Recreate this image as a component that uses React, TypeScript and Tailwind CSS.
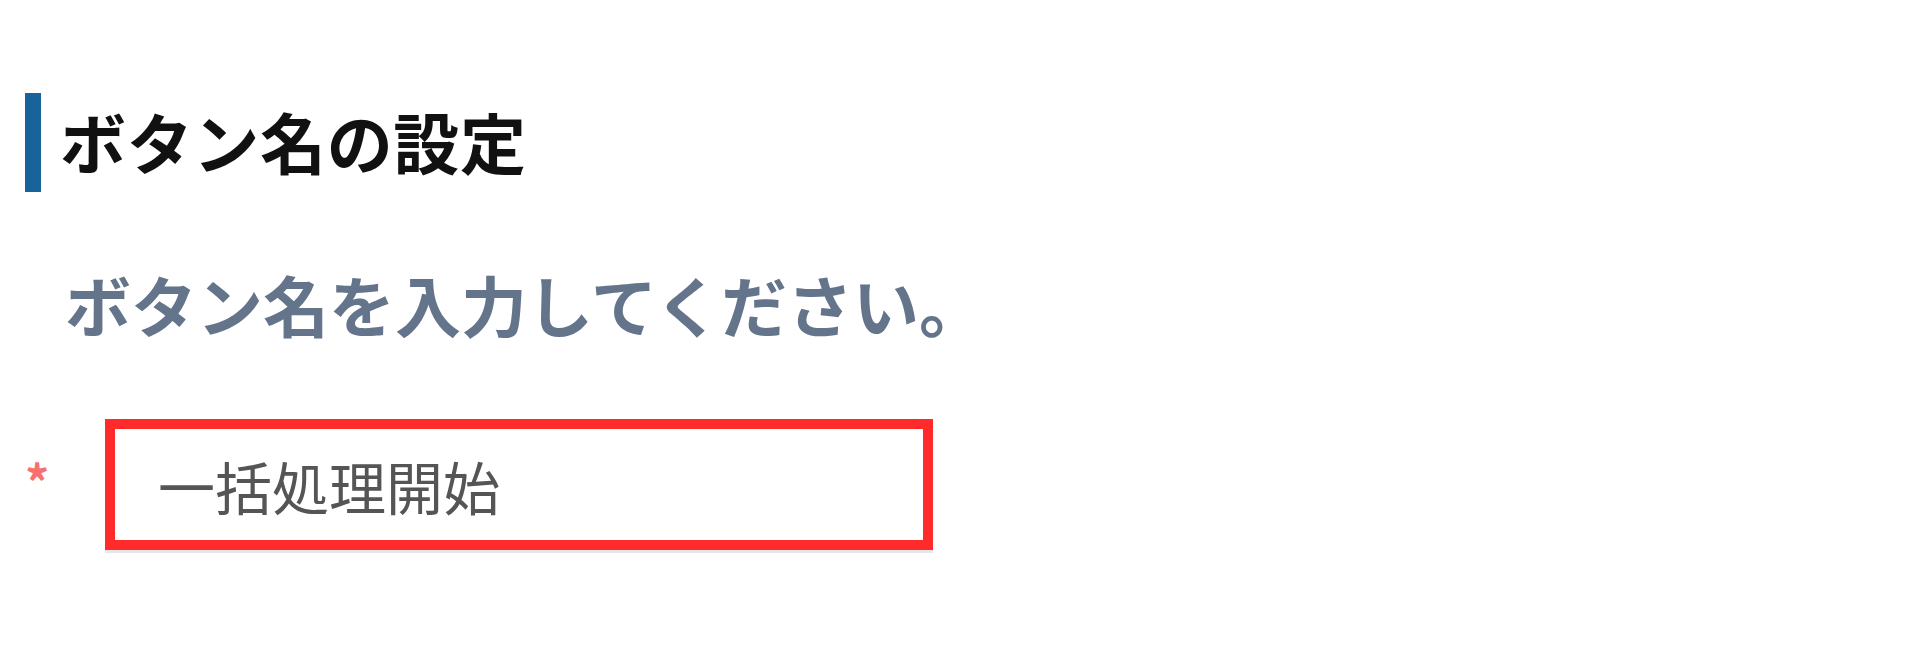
import React from 'react'

const App: React.FC = () => {
  return (
    <div className="min-h-[645px] bg-white font-['Noto_Sans_CJK_JP','Noto_Sans',sans-serif]">
      <div className="pt-[93px] pl-[25px]">
        {/* Section heading */}
        <div className="flex h-[99px] items-center">
          <div className="w-[16px] self-stretch bg-[#17639a]" />
          <h2 className="mb-[6px] ml-[19px] text-[66px] font-bold leading-none tracking-[0.01em] text-[#111111]">
            ボタン名の設定
          </h2>
        </div>

        {/* Description */}
        <p className="mt-[78px] pl-[40px] text-[66px] font-bold leading-[66px] text-[#64748b]">
          ボタン名を入力してください。
        </p>

        {/* Input row */}
        <div className="mt-[83px] flex items-start">
          <span className="mt-[37px] w-[80px] text-[48px] font-bold leading-none text-[#f87171]">*</span>
          <input
            type="text"
            defaultValue="一括処理開始"
            className="h-[131px] w-[828px] border-[10px] border-[#ff2b2b] bg-white pl-[43px] text-[57px] text-[#555555] shadow-[0_3px_0_#e5e7eb] outline-none"
          />
        </div>
      </div>
    </div>
  )
}

export default App
